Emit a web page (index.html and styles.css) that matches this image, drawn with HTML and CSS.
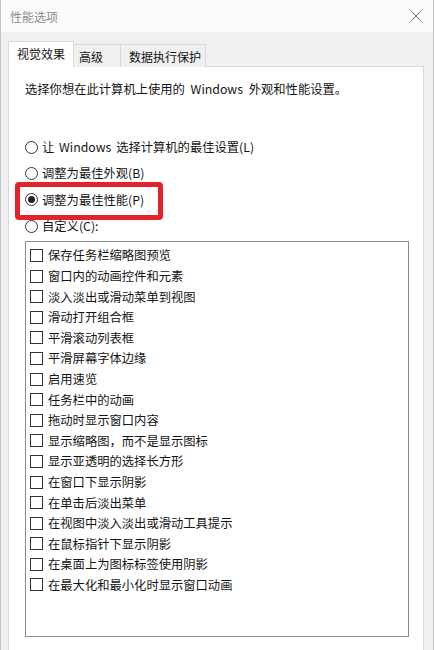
FILE: index.html
```html
<!DOCTYPE html>
<html lang="zh-CN">
<head>
<meta charset="utf-8">
<title>性能选项</title>
<link rel="stylesheet" href="styles.css">
</head>
<body>
<div class="window">
  <div class="titlebar">
    <span class="title">性能选项</span>
    <svg class="close" width="12" height="12" viewBox="0 0 12 12"><path d="M0.5 0.5 L11.5 11.5 M11.5 0.5 L0.5 11.5" stroke="#666" stroke-width="1" fill="none"/></svg>
  </div>
  <div class="body">
    <div class="tabs">
      <div class="tab active">视觉效果</div>
      <div class="tab adv">高级</div>
      <div class="tab dep">数据执行保护</div>
    </div>
    <div class="panel">
      <p class="desc">选择你想在此计算机上使用的 Windows 外观和性能设置。</p>
      <div class="radios">
        <div class="radio-row"><span class="radio"></span>让 Windows 选择计算机的最佳设置(L)</div>
        <div class="radio-row"><span class="radio"></span>调整为最佳外观(B)</div>
        <div class="radio-row"><span class="radio checked"></span>调整为最佳性能(P)<span class="highlight"></span></div>
        <div class="radio-row"><span class="radio"></span>自定义(C):</div>
      </div>
      <div class="list">
        <div class="item"><span class="check"></span>保存任务栏缩略图预览</div>
        <div class="item"><span class="check"></span>窗口内的动画控件和元素</div>
        <div class="item"><span class="check"></span>淡入淡出或滑动菜单到视图</div>
        <div class="item"><span class="check"></span>滑动打开组合框</div>
        <div class="item"><span class="check"></span>平滑滚动列表框</div>
        <div class="item"><span class="check"></span>平滑屏幕字体边缘</div>
        <div class="item"><span class="check"></span>启用速览</div>
        <div class="item"><span class="check"></span>任务栏中的动画</div>
        <div class="item"><span class="check"></span>拖动时显示窗口内容</div>
        <div class="item"><span class="check"></span>显示缩略图，而不是显示图标</div>
        <div class="item"><span class="check"></span>显示亚透明的选择长方形</div>
        <div class="item"><span class="check"></span>在窗口下显示阴影</div>
        <div class="item"><span class="check"></span>在单击后淡出菜单</div>
        <div class="item"><span class="check"></span>在视图中淡入淡出或滑动工具提示</div>
        <div class="item"><span class="check"></span>在鼠标指针下显示阴影</div>
        <div class="item"><span class="check"></span>在桌面上为图标标签使用阴影</div>
        <div class="item"><span class="check"></span>在最大化和最小化时显示窗口动画</div>
      </div>
    </div>
  </div>
</div>
</body>
</html>
```

FILE: styles.css
```css
* { box-sizing: border-box; }
html, body { margin: 0; padding: 0; }
body {
  width: 434px;
  height: 650px;
  overflow: hidden;
  background: #f0f0f0;
  font-family: "Noto Sans CJK SC", "Noto Sans", sans-serif;
  font-size: 12.3px;
  color: #141414;
}
.window {
  width: 434px;
  height: 650px;
  border-left: 1px solid #c4c4c4;
  border-right: 1px solid #c4c4c4;
  background: #f0f0f0;
  display: flex;
  flex-direction: column;
}
.titlebar {
  height: 32px;
  flex: none;
  background: #fbfbfb;
  display: flex;
  align-items: center;
  justify-content: space-between;
  padding: 0 11px 0 9px;
}
.title {
  color: #8c8c8c;
  font-size: 12px;
}
.close { display: block; }
.body {
  flex: 1;
  padding: 9px 9px 0 7px;
  display: flex;
  flex-direction: column;
}
.tabs {
  display: flex;
  align-items: flex-end;
  height: 26px;
  position: relative;
  z-index: 1;
  margin-bottom: -1px;
  font-size: 12px;
}
.tab {
  flex: none;
  white-space: nowrap;
  height: 23px;
  display: flex;
  align-items: center;
  border: 1px solid #d9d9d9;
  border-bottom: none;
  background: #f0f0f0;
  margin-left: -1px;
}
.tab.active {
  margin-left: 0;
  width: 66px;
  height: 26px;
  padding: 0 0 2px 8px;
  background: #fff;
  position: relative;
  z-index: 2;
}
.tab.adv { width: 48px; padding-left: 5px; margin-left: -1px; }
.tab.dep { width: 86px; padding-left: 8px; }
.panel {
  flex: 1;
  background: #fff;
  border: 1px solid #d9d9d9;
  border-bottom: none;
  padding: 12px 14px 0 16px;
}
.desc {
  margin: 0;
  height: 20px;
  line-height: 20px;
  word-spacing: 3px;
}
.radios {
  margin-top: 35px;
  display: flex;
  flex-direction: column;
}
.radio-row {
  height: 26.3px;
  display: flex;
  align-items: center;
  position: relative;
  word-spacing: 2px;
}
.radio {
  width: 13px;
  height: 13px;
  border: 1px solid #333;
  border-radius: 50%;
  margin-right: 4px;
  display: flex;
  align-items: center;
  justify-content: center;
  background: #fff;
  flex: none;
}
.radio.checked::after {
  content: "";
  width: 7px;
  height: 7px;
  border-radius: 50%;
  background: #222;
}
.highlight {
  position: absolute;
  left: -10px;
  top: -5px;
  width: 148px;
  height: 38px;
  border: 5px solid #e2232b;
  border-radius: 4px;
}
.list {
  margin-top: 2px;
  width: 384px;
  height: 396px;
  border: 1px solid #8a8a8a;
  padding: 3px 0 0 4px;
}
.item {
  height: 20.6px;
  display: flex;
  align-items: center;
}
.check {
  width: 13px;
  height: 13px;
  border: 1px solid #333;
  background: #fff;
  margin-right: 5px;
  flex: none;
}
```
